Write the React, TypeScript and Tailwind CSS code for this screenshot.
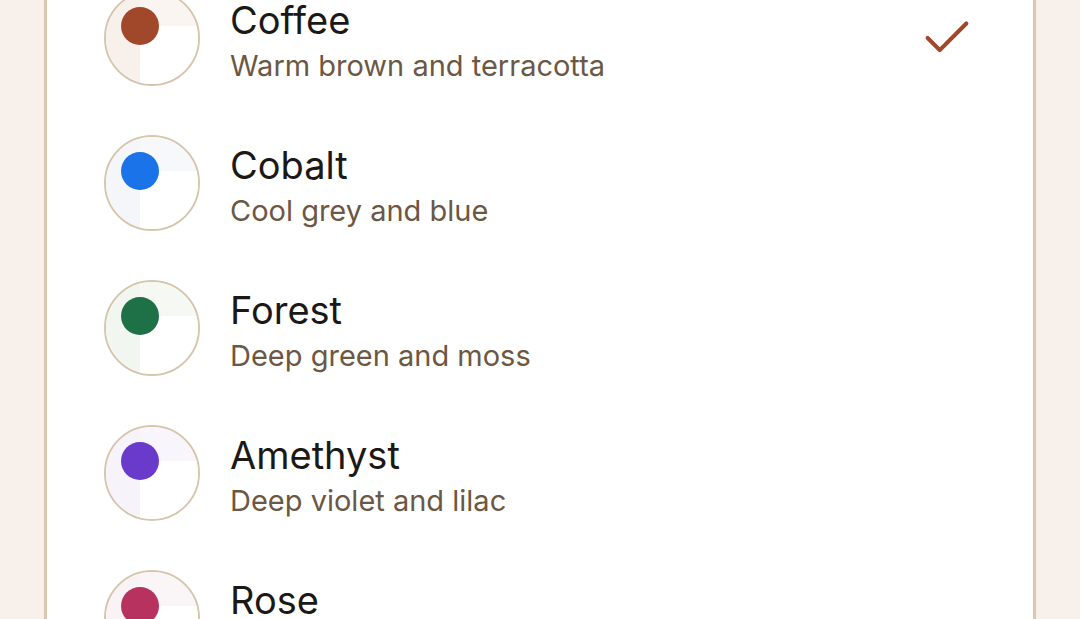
import { Check } from 'lucide-react';

type Theme = {
  name: string;
  description: string;
  accent: string;
  side: string;
  top: string;
};

const themes: Theme[] = [
  { name: 'Coffee', description: 'Warm brown and terracotta', accent: 'bg-[#a2482a]', side: 'bg-[#f8f1eb]', top: 'bg-[#faf5f0]' },
  { name: 'Cobalt', description: 'Cool grey and blue', accent: 'bg-[#1a73e8]', side: 'bg-[#f4f6fa]', top: 'bg-[#f7f8fb]' },
  { name: 'Forest', description: 'Deep green and moss', accent: 'bg-[#1e7146]', side: 'bg-[#f2f6f1]', top: 'bg-[#f5f8f3]' },
  { name: 'Amethyst', description: 'Deep violet and lilac', accent: 'bg-[#6a3acb]', side: 'bg-[#f6f3fb]', top: 'bg-[#f8f5fc]' },
  { name: 'Rose', description: 'Berry pink and blush', accent: 'bg-[#b8325f]', side: 'bg-[#f9f3f5]', top: 'bg-[#faf5f7]' },
];

function Swatch({ theme }: { theme: Theme }) {
  return (
    <div className="relative h-[96px] w-[96px] shrink-0 overflow-hidden rounded-full border-2 border-[#d6c6ae]">
      <div className="grid h-full w-full grid-cols-[34px_1fr] grid-rows-[34px_1fr]">
        <div className={theme.side} />
        <div className={theme.top} />
        <div className={theme.side} />
        <div className="bg-white" />
      </div>
      <div className={`absolute left-[15px] top-[15px] h-[38px] w-[38px] rounded-full ${theme.accent}`} />
    </div>
  );
}

export default function App() {
  const selected = 'Coffee';

  return (
    <div className="h-[619px] overflow-hidden bg-[#f8f1eb] px-[44px] font-['Inter','Noto_Sans',sans-serif]">
      <div className="-mt-[38px] rounded-[28px] border-[3px] border-[#d8c6ae] bg-white pl-[57px] pr-[57px]">
        {themes.map((theme) => (
          <div key={theme.name} className="flex h-[145px] items-center gap-[30px]">
            <Swatch theme={theme} />
            <div className="flex-1 pt-[8px]">
              <div className="text-[38px] leading-[40px] text-[#1b1815]">{theme.name}</div>
              <div className="mt-[8px] text-[29px] leading-[36px] text-[#6c5744]">{theme.description}</div>
            </div>
            {theme.name === selected && (
              <Check className="h-[58px] w-[58px] text-[#a2482a]" strokeWidth={1.7} />
            )}
          </div>
        ))}
      </div>
    </div>
  );
}
